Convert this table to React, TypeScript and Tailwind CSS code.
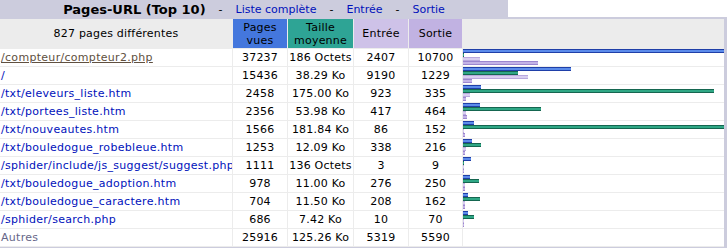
interface UrlRow {
  url: string;
  pages: number;
  size: string;
  sizeKo: number;
  entry: number;
  exit: number;
  hover?: boolean;
}

const rows: UrlRow[] = [
  { url: "/compteur/compteur2.php", pages: 37237, size: "186 Octets", sizeKo: 0.18, entry: 2407, exit: 10700, hover: true },
  { url: "/", pages: 15436, size: "38.29 Ko", sizeKo: 38.29, entry: 9190, exit: 1229 },
  { url: "/txt/eleveurs_liste.htm", pages: 2458, size: "175.00 Ko", sizeKo: 175, entry: 923, exit: 335 },
  { url: "/txt/portees_liste.htm", pages: 2356, size: "53.98 Ko", sizeKo: 53.98, entry: 417, exit: 464 },
  { url: "/txt/nouveautes.htm", pages: 1566, size: "181.84 Ko", sizeKo: 181.84, entry: 86, exit: 152 },
  { url: "/txt/bouledogue_robebleue.htm", pages: 1253, size: "12.09 Ko", sizeKo: 12.09, entry: 338, exit: 216 },
  { url: "/sphider/include/js_suggest/suggest.php", pages: 1111, size: "136 Octets", sizeKo: 0.13, entry: 3, exit: 9 },
  { url: "/txt/bouledogue_adoption.htm", pages: 978, size: "11.00 Ko", sizeKo: 11, entry: 276, exit: 250 },
  { url: "/txt/bouledogue_caractere.htm", pages: 704, size: "11.50 Ko", sizeKo: 11.5, entry: 208, exit: 162 },
  { url: "/sphider/search.php", pages: 686, size: "7.42 Ko", sizeKo: 7.42, entry: 10, exit: 70 },
];

const BAR = 260;
const maxPages = 37237;
const maxSize = 181.84;

const barWidth = (v: number, max: number) => Math.floor((BAR * v) / max) + 1;

const cell = "border-r border-b border-[#ECECEC] flex items-center justify-center";

function Bars({ row }: { row: UrlRow }) {
  return (
    <div className="border-b border-[#ECECEC] flex flex-col">
      <div
        className="h-[4px] bg-[#5B8BEA] border-y border-[#1F3FA8]"
        style={{ width: barWidth(row.pages, maxPages) }}
      />
      <div
        className="h-[4px] bg-[#2FA785] border-y border-[#156650]"
        style={{ width: barWidth(row.sizeKo, maxSize) }}
      />
      <div
        className="h-[4px] bg-[#D8CEF0] border-y border-[#B9A9DE]"
        style={{ width: barWidth(row.entry, maxPages) }}
      />
      <div
        className="h-[4px] bg-[#C3B3E6] border-y border-[#9C86CF]"
        style={{ width: barWidth(row.exit, maxPages) }}
      />
    </div>
  );
}

function Sep() {
  return <span className="mx-[13px] text-black">-</span>;
}

export default function App() {
  return (
    <div className="w-[727px] h-[248px] bg-white text-[11px] leading-[13px] text-black font-['DejaVu_Sans',Verdana,sans-serif] overflow-hidden">
      <div className="w-[508px] h-[17px] bg-[#CCCCDD] flex items-center justify-center pt-[1px]">
        <span className="text-[13px] font-bold">Pages-URL (Top 10)</span>
        <Sep />
        <span className="text-[#0011BB]">Liste complète</span>
        <Sep />
        <span className="text-[#0011BB]">Entrée</span>
        <Sep />
        <span className="text-[#0011BB]">Sortie</span>
      </div>
      <div className="bg-[#CCCCDD] pt-[2px] pr-[3px] pb-[1px]">
        <div className="grid grid-cols-[233px_55px_66px_55px_54px_261px] bg-white tracking-[0.2px]">
          <div className={`${cell} h-[30px] bg-[#ECECEC]`}>827 pages différentes</div>
          <div className={`${cell} h-[30px] bg-[#4477DD] text-center`}>
            Pages
            <br />
            vues
          </div>
          <div className={`${cell} h-[30px] bg-[#2EA495] text-center`}>
            Taille
            <br />
            moyenne
          </div>
          <div className={`${cell} h-[30px] bg-[#CEC2E8]`}>Entrée</div>
          <div className={`${cell} h-[30px] bg-[#C1B2E2]`}>Sortie</div>
          <div className="h-[30px] border-b border-[#ECECEC] bg-[#ECECEC]" />

          {rows.map((r) => (
            <div key={r.url} className="contents">
              <div className="h-[18px] border-r border-b border-[#ECECEC] flex items-center pl-[1px] whitespace-nowrap overflow-hidden tracking-[0.3px]">
                <span className={r.hover ? "text-[#605040] underline" : "text-[#0011BB]"}>{r.url}</span>
              </div>
              <div className={`${cell} h-[18px]`}>{r.pages}</div>
              <div className={`${cell} h-[18px]`}>{r.size}</div>
              <div className={`${cell} h-[18px]`}>{r.entry}</div>
              <div className={`${cell} h-[18px]`}>{r.exit}</div>
              <Bars row={r} />
            </div>
          ))}

          <div className="h-[18px] border-r border-b border-[#ECECEC] flex items-center pl-[1px] text-[#666688] tracking-[0.3px]">
            Autres
          </div>
          <div className={`${cell} h-[18px]`}>25916</div>
          <div className={`${cell} h-[18px]`}>125.26 Ko</div>
          <div className={`${cell} h-[18px]`}>5319</div>
          <div className={`${cell} h-[18px]`}>5590</div>
          <div className="h-[18px] border-b border-[#ECECEC]" />
        </div>
      </div>
    </div>
  );
}
